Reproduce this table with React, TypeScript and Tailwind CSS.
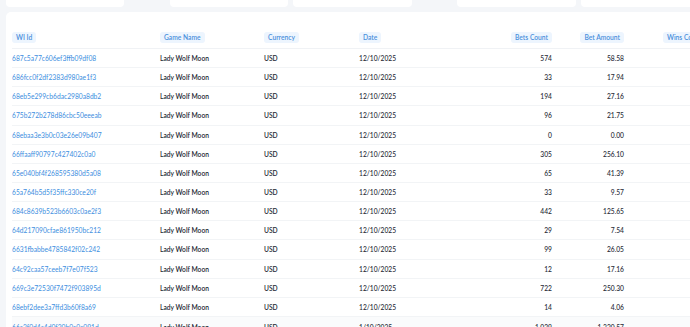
const rows = [
  ["687c5a77c606ef3ffb09df08", "574", "58.58"],
  ["686fcc0f2df2383d980ae1f3", "33", "17.94"],
  ["68eb5e299cb6dac2980a8db2", "194", "27.16"],
  ["675b272b278d86cbc50eeeab", "96", "21.75"],
  ["68ebaa3e3b0c03e26e09b407", "0", "0.00"],
  ["66ffaaff90797c427402c0a0", "305", "256.10"],
  ["65e040bf4f268595380d5a08", "65", "41.39"],
  ["65a764b5d5f35ffc330ce20f", "33", "9.57"],
  ["684c8639b523b6603c0ae2f3", "442", "125.65"],
  ["64d217090cfae861950bc212", "29", "7.54"],
  ["6631fbabbe4785842f02c242", "99", "26.05"],
  ["64c92caa57ceeb7f7e07f523", "12", "17.16"],
  ["669c3e72530f7472f903895d", "722", "250.30"],
  ["68ebf2dee3a7ffd3b60f8a69", "14", "4.06"],
];

const Pill = ({ children }: { children: string }) => (
  <span className="inline-block rounded-[3px] bg-[#edf5fe] px-[4px] leading-[11px] text-[#4a8fdc] whitespace-nowrap">
    {children}
  </span>
);

const cols = "grid grid-cols-[148px_104px_95px_100px_93px_72px_1fr] items-center";

export default function App() {
  return (
    <div className="h-[327px] w-[690px] overflow-hidden bg-[#f4f6f9] font-['Lato','Noto_Sans',sans-serif] text-[6.7px]">
      {/* stat cards, scrolled mostly out of view */}
      <div className="flex h-[7px]">
        <div className="ml-[6px] w-[118px] shrink-0 rounded-b-[4px] bg-white" />
        <div className="ml-[46px] w-[118px] shrink-0 rounded-b-[4px] bg-white" />
        <div className="ml-[5px] w-[119px] shrink-0 rounded-b-[4px] bg-white" />
        <div className="ml-[45px] w-[119px] shrink-0 rounded-b-[4px] bg-white" />
        <div className="ml-[5px] w-[119px] shrink-0 rounded-b-[4px] bg-white" />
      </div>

      <div className="ml-[6px] mt-[5px] w-[700px] rounded-tl-[5px] bg-white pl-[6px]">
        <div className={`${cols} h-[37px] items-end border-b border-[#f0f2f5] pb-[5px] font-semibold`}>
          <div><Pill>WI Id</Pill></div>
          <div><Pill>Game Name</Pill></div>
          <div><Pill>Currency</Pill></div>
          <div><Pill>Date</Pill></div>
          <div className="text-right"><Pill>Bets Count</Pill></div>
          <div className="text-right"><Pill>Bet Amount</Pill></div>
          <div className="pl-[39px]"><Pill>Wins Count</Pill></div>
        </div>

        {rows.map(([id, count, amount]) => (
          <div key={id} className={`${cols} h-[19.15px] border-b border-[#f2f4f6] font-medium text-[#262a35]`}>
            <div className="font-normal text-[#3c8ee0]">{id}</div>
            <div className="font-semibold">Lady Wolf Moon</div>
            <div className="font-semibold">USD</div>
            <div>12/10/2025</div>
            <div className="text-right">{count}</div>
            <div className="text-right">{amount}</div>
            <div />
          </div>
        ))}
        <div className={`${cols} h-[19.15px] bg-[#fafbfc] font-medium text-[#262a35]`}>
          <div className="font-normal text-[#3c8ee0]">66c2f0d4c4d0f20b0c0c091d</div>
          <div className="font-semibold">Lady Wolf Moon</div>
          <div className="font-semibold">USD</div>
          <div>1/10/2025</div>
          <div className="text-right">1,029</div>
          <div className="text-right">1,320.57</div>
          <div />
        </div>
      </div>
    </div>
  );
}
